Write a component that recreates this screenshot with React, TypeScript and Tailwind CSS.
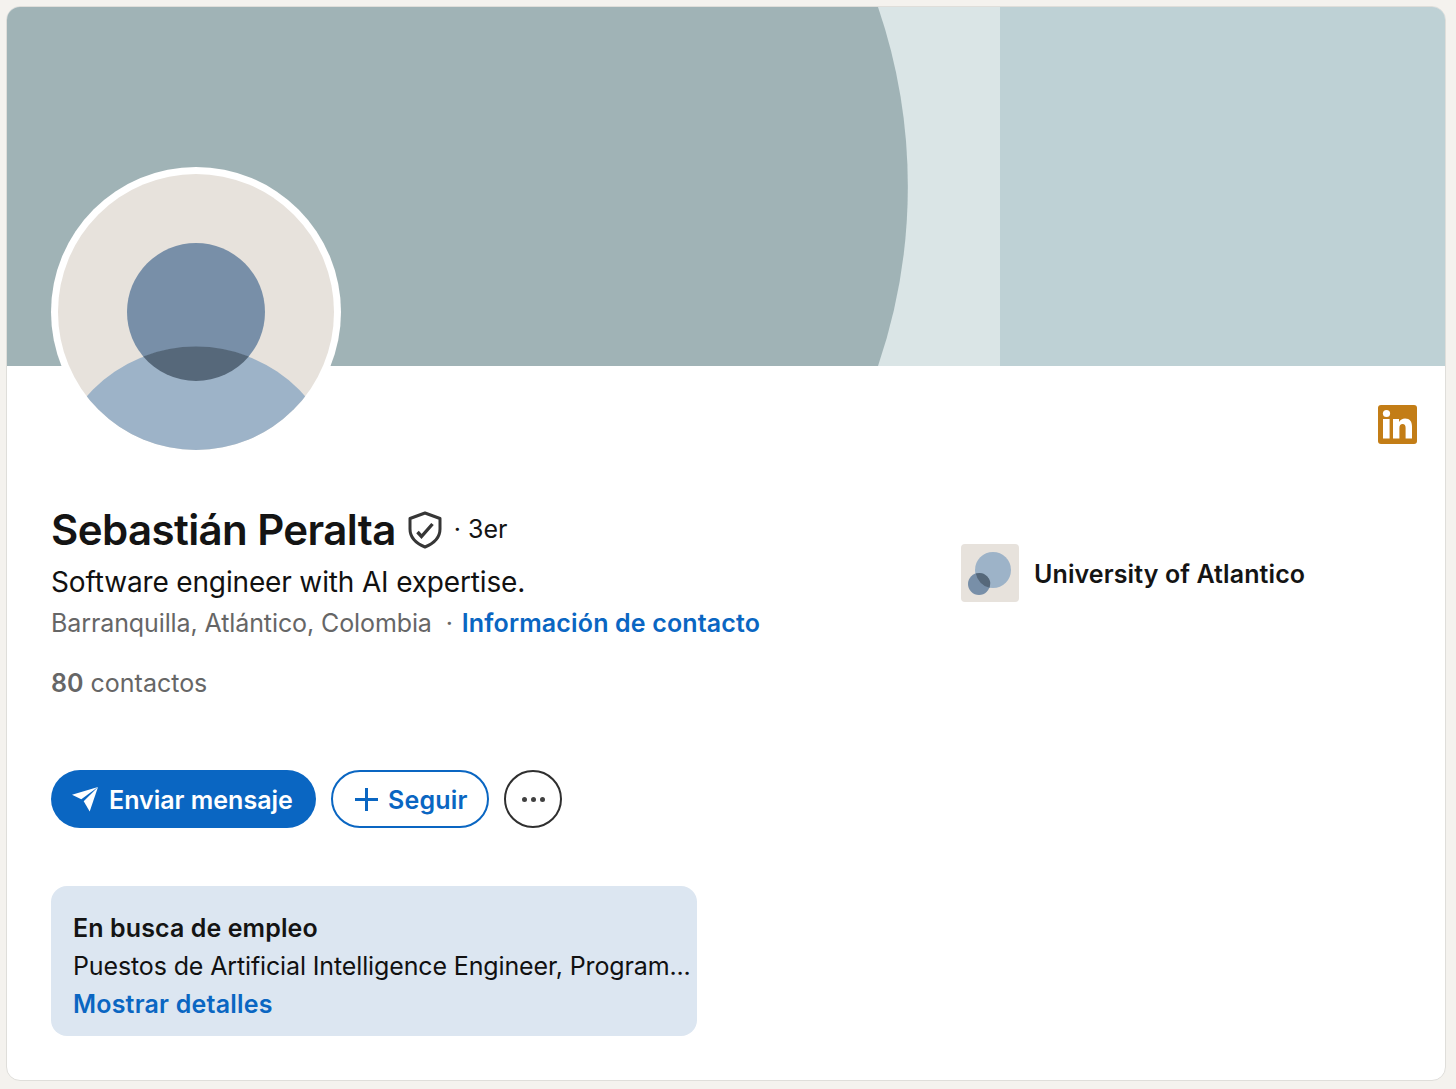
import React from "react";

const font = { fontFamily: "Inter, 'Liberation Sans', sans-serif" };

function Banner() {
    return (
        <svg viewBox="0 0 1438 359" className="block w-[1438px] h-[359px]">
            <rect width="1438" height="359" fill="#dae5e6" />
            <rect x="993" width="445" height="359" fill="#bed1d5" />
            <path d="M0 0 H871 A555 555 0 0 1 871 359 H0 Z" fill="#a0b3b6" />
        </svg>
    );
}

function Avatar() {
    return (
        <div className="w-[290px] h-[290px] rounded-full bg-white p-[7px] shrink-0">
            <svg viewBox="0 0 276 276" className="block w-[276px] h-[276px]">
                <defs>
                    <clipPath id="avatar-clip">
                        <circle cx="138" cy="138" r="138" />
                    </clipPath>
                </defs>
                <g clipPath="url(#avatar-clip)">
                    <rect width="276" height="276" fill="#e7e2dc" />
                    <circle cx="138" cy="138" r="69" fill="#788fa8" />
                    <circle cx="138" cy="319" r="146" fill="#9db3c8" />
                    <path d="M85.2 182.4 A146 146 0 0 1 190.8 182.4 A69 69 0 0 1 85.2 182.4 Z" fill="#56687a" />
                </g>
            </svg>
        </div>
    );
}

function LinkedInIcon() {
    return (
        <svg viewBox="0 0 39 39" className="block w-[39px] h-[39px] mt-[238px] mr-[28px]">
            <rect width="39" height="39" rx="3" fill="#c37d16" />
            <circle cx="8.5" cy="8.5" r="3.6" fill="#fff" />
            <rect x="5" y="14" width="6.6" height="19.5" fill="#fff" />
            <path d="M15 14 H21 V17 C22.3 14.8 24.4 13.6 27 13.6 C32 13.6 34 16.8 34 21.5 V33.5 H27.6 V23 C27.6 20.4 26.6 19 24.6 19 C22.5 19 21.4 20.6 21.4 23 V33.5 H15 Z" fill="#fff" />
        </svg>
    );
}

function ShieldIcon() {
    return (
        <svg viewBox="0 0 34 38" className="block w-[34px] h-[38px]" fill="none" stroke="#363636">
            <path d="M17 2 L32 7.5 V18 C32 26.5 25.5 32.5 17 36 C8.5 32.5 2 26.5 2 18 V7.5 Z" strokeWidth="3" strokeLinejoin="round" />
            <path d="M9.5 21 L13.5 25.5 L24.5 13" strokeWidth="3.4" />
        </svg>
    );
}

function SendIcon() {
    return (
        <svg viewBox="0 0 26 25" className="block w-[26px] h-[25px]">
            <path d="M0 7.7 L26 0 L9.3 12.3 Z" fill="#fff" />
            <path d="M26 0 L17.7 24.5 L11.7 14.3 Z" fill="#fff" />
        </svg>
    );
}

function PlusIcon() {
    return (
        <svg viewBox="0 0 23 23" className="block w-[23px] h-[23px]">
            <path d="M10 0 H13 V10 H23 V13 H13 V23 H10 V13 H0 V10 H10 Z" fill="#0a66c2" />
        </svg>
    );
}

export default function App() {
    return (
        <div className="w-full h-[1089px] bg-[#f4f2ee] p-[6px]" style={font}>
            <div className="w-[1440px] h-[1075px] bg-white border border-[#dfdeda] rounded-[14px] overflow-hidden">
                <Banner />

                <div className="flex justify-between items-start pl-[44px] -mt-[199px] relative">
                    <Avatar />
                    <LinkedInIcon />
                </div>

                <div className="flex pl-[44px] mt-[48px]">
                    <div className="w-[910px] shrink-0">
                        <div className="flex items-center h-[50px]">
                            <h1 className="text-[42px] leading-[50px] font-semibold text-[#141414] tracking-[-0.6px]">Sebastián Peralta</h1>
                            <div className="ml-[12px]"><ShieldIcon /></div>
                            <span className="ml-[12px] text-[25px] text-[#141414]">· 3er</span>
                        </div>
                        <div className="text-[28px] leading-[38px] text-[#111111] mt-[8px] tracking-[-0.15px]">Software engineer with AI expertise.</div>
                        <div className="text-[25px] leading-[36px] text-[#666666] mt-[4px] whitespace-pre tracking-[-0.1px]">
                            Barranquilla, Atlántico, Colombia{"  "}· <span className="ml-[2px] font-semibold text-[#0a66c2] tracking-[0.15px]">Información de contacto</span>
                        </div>
                        <div className="text-[25px] leading-[36px] text-[#666666] mt-[24px]">
                            <span className="font-semibold">80</span> contactos
                        </div>

                        <div className="flex gap-[15px] mt-[69px]">
                            <button className="flex items-center gap-[11px] h-[58px] w-[265px] pl-[21px] rounded-full bg-[#0a66c2] text-white text-[25px] font-semibold">
                                <SendIcon />
                                <span className="pt-[3px]">Enviar mensaje</span>
                            </button>
                            <button className="flex items-center gap-[10px] h-[58px] w-[158px] pl-[22px] rounded-full border-2 border-[#0a66c2] text-[#0a66c2] text-[25px] font-semibold">
                                <PlusIcon />
                                <span className="pt-[3px] tracking-[0.2px]">Seguir</span>
                            </button>
                            <button className="flex items-center justify-center gap-[4px] w-[58px] h-[58px] rounded-full border-2 border-[#2f2f2f]">
                                <span className="w-[5px] h-[5px] rounded-full bg-[#404040]" />
                                <span className="w-[5px] h-[5px] rounded-full bg-[#404040]" />
                                <span className="w-[5px] h-[5px] rounded-full bg-[#404040]" />
                            </button>
                        </div>

                        <div className="w-[646px] h-[150px] bg-[#dce6f1] rounded-[16px] mt-[58px] pl-[22px] pt-[23px]">
                            <div className="text-[25px] leading-[38px] font-semibold text-[#141414] tracking-[0.1px]">En busca de empleo</div>
                            <div className="text-[25px] leading-[38px] text-[#111111] whitespace-nowrap tracking-[-0.13px]">Puestos de Artificial Intelligence Engineer, Program...</div>
                            <div className="text-[25px] leading-[38px] font-semibold text-[#0a66c2] tracking-[0.2px]">Mostrar detalles</div>
                        </div>
                    </div>

                    <div className="flex items-center h-[58px] mt-[39px]">
                        <svg viewBox="0 0 58 58" className="block w-[58px] h-[58px]">
                            <rect width="58" height="58" rx="4" fill="#e7e2dc" />
                            <circle cx="32" cy="26" r="18" fill="#9db3c8" />
                            <circle cx="18" cy="40" r="11" fill="#788fa8" />
                            <path d="M14.8 29.5 A18 18 0 0 0 28.5 43.7 A11 11 0 0 0 14.8 29.5 Z" fill="#56687a" />
                        </svg>
                        <span className="ml-[15px] pt-[4px] text-[25px] font-semibold text-[#141414] tracking-[0.1px]">University of Atlantico</span>
                    </div>
                </div>
            </div>
        </div>
    );
}
